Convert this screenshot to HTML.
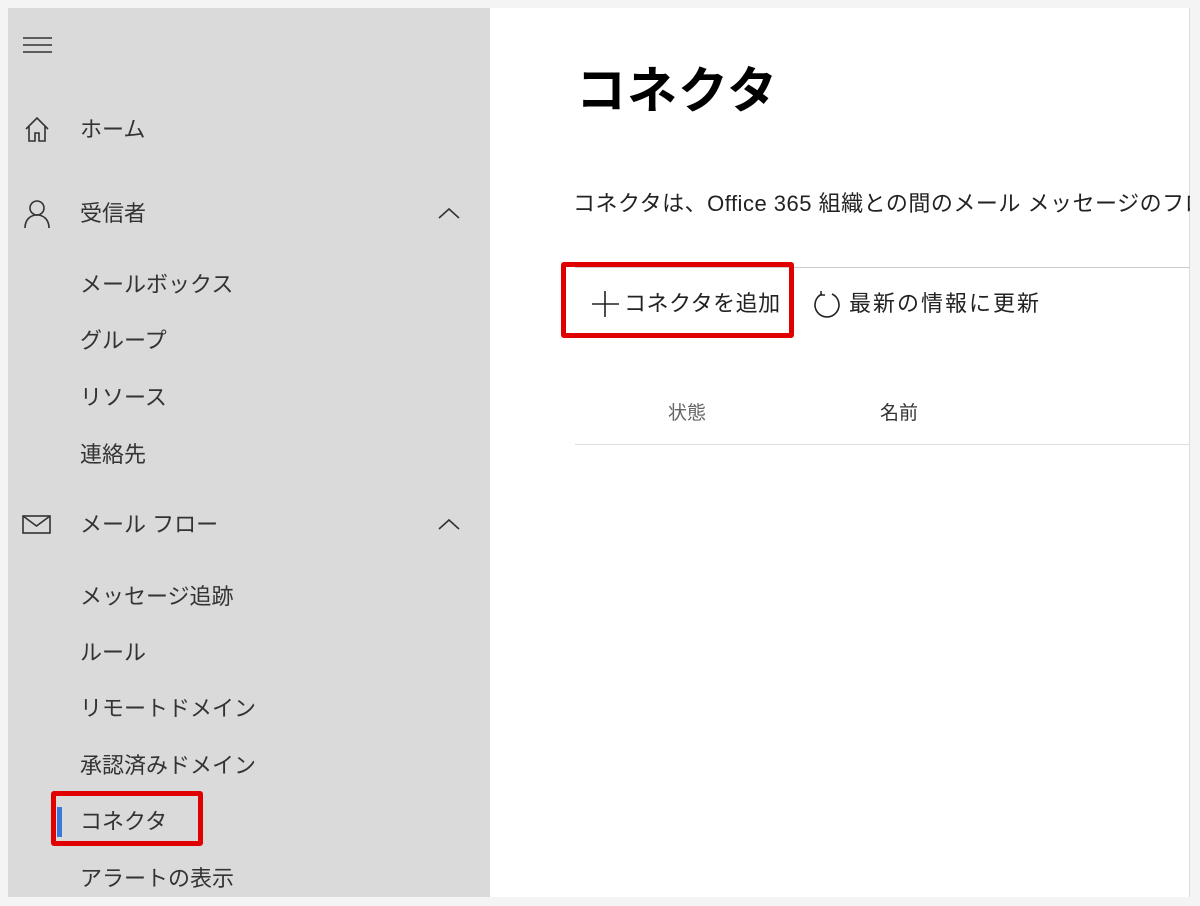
<!DOCTYPE html>
<html><head><meta charset="utf-8"><style>
*{margin:0;padding:0;box-sizing:border-box}
body{width:1200px;height:906px;background:#f4f4f4;position:relative;overflow:hidden;font-family:"Liberation Sans","Noto Sans CJK JP",sans-serif;color:#333}
.side{position:absolute;left:8px;top:8px;width:482px;height:889px;background:#dadada}
.main{position:absolute;left:490px;top:8px;width:700px;height:889px;background:#fff;border-right:1px solid #ddd}
.t{position:absolute;white-space:nowrap;font-size:22px;line-height:30px;color:#333}
.ic{position:absolute}
.box{position:absolute;border:5px solid #e00000;border-radius:3px}
</style></head><body>
<div class="side"></div>
<div class="main"></div>
<svg class="ic" style="left:22px;top:36px" width="32" height="20"><path d="M1 2H30M1 9H30M1 16H30" stroke="#333" stroke-width="1.5"/></svg>
<svg class="ic" style="left:24px;top:116px" width="28" height="28"><path d="M2 13L13 2L24 13M5 10V25H11V17H15V25H21V10" fill="none" stroke="#333" stroke-width="1.6"/></svg>
<div class="t" style="left:80px;top:115px">ホーム</div>
<svg class="ic" style="left:24px;top:199px" width="28" height="30"><circle cx="13" cy="9" r="7" fill="none" stroke="#333" stroke-width="1.6"/><path d="M1 29C1 20 7 16 13 16C19 16 25 20 25 29" fill="none" stroke="#333" stroke-width="1.6"/></svg>
<div class="t" style="left:80px;top:199px">受信者</div>
<svg class="ic" style="left:437px;top:206px" width="24" height="14"><path d="M2 12L12 3L22 12" fill="none" stroke="#333" stroke-width="1.6"/></svg>
<div class="t" style="left:80px;top:270px">メールボックス</div>
<div class="t" style="left:80px;top:326px">グループ</div>
<div class="t" style="left:80px;top:383px">リソース</div>
<div class="t" style="left:80px;top:440px">連絡先</div>
<svg class="ic" style="left:22px;top:515px" width="30" height="20"><rect x="1" y="1" width="27" height="17" fill="none" stroke="#333" stroke-width="1.6"/><path d="M1 1L14.5 11L28 1" fill="none" stroke="#333" stroke-width="1.6"/></svg>
<div class="t" style="left:80px;top:510px">メール フロー</div>
<svg class="ic" style="left:437px;top:517px" width="24" height="14"><path d="M2 12L12 3L22 12" fill="none" stroke="#333" stroke-width="1.6"/></svg>
<div class="t" style="left:80px;top:582px">メッセージ追跡</div>
<div class="t" style="left:80px;top:638px">ルール</div>
<div class="t" style="left:80px;top:694px">リモートドメイン</div>
<div class="t" style="left:80px;top:751px">承認済みドメイン</div>
<div style="position:absolute;left:57px;top:807px;width:5px;height:30px;background:#3a78d8"></div>
<div class="t" style="left:80px;top:807px">コネクタ</div>
<div class="box" style="left:51px;top:791px;width:152px;height:55px"></div>
<div class="t" style="left:80px;top:864px">アラートの表示</div>

<div class="t" style="left:576px;top:58px;font-size:50px;line-height:66px;font-weight:bold;color:#000;letter-spacing:1px">コネクタ</div>
<div class="t" style="left:573px;top:189px;font-size:22px;color:#222;width:617px;overflow:hidden;letter-spacing:0.5px">コネクタは、Office 365 組織との間のメール メッセージのフロー</div>
<div style="position:absolute;left:575px;top:267px;width:615px;height:1px;background:#ccc"></div>
<svg class="ic" style="left:591px;top:290px" width="30" height="28"><path d="M14 1V27M1 14H28" stroke="#222" stroke-width="1.6"/></svg>
<div class="t" style="left:624px;top:289px;font-size:22px;color:#222;letter-spacing:0.5px">コネクタを追加</div>
<div class="box" style="left:561px;top:262px;width:233px;height:76px"></div>
<svg class="ic" style="left:813px;top:290px" width="30" height="30"><path d="M9 4A12 12 0 1 0 19 4" fill="none" stroke="#222" stroke-width="1.6"/><path d="M8 1V5H12" fill="none" stroke="#222" stroke-width="1.5"/></svg>
<div class="t" style="left:849px;top:289px;font-size:22px;color:#222;letter-spacing:2px">最新の情報に更新</div>
<div class="t" style="left:668px;top:399px;font-size:19px;color:#666">状態</div>
<div class="t" style="left:880px;top:399px;font-size:19px;color:#333">名前</div>
<div style="position:absolute;left:575px;top:444px;width:615px;height:1px;background:#ddd"></div>
</body></html>
